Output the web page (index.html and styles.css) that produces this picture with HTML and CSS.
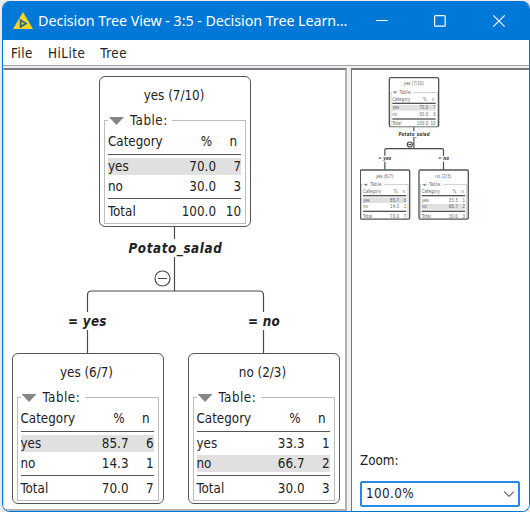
FILE: index.html
```html
<!DOCTYPE html>
<html lang="en">
<head>
<meta charset="utf-8">
<title>Decision Tree View</title>
<link rel="stylesheet" href="styles.css">
</head>
<body>
<div class="window">
  <header class="titlebar">
    <svg class="logo" width="22" height="20" viewBox="0 0 22 20"><path d="M11 1 21 18H1Z" fill="#f7d51d"/><path d="M8.6 9.2 14 12.5 8.6 15.8Z" fill="none" stroke="#276a8c" stroke-width="1.8"/></svg>
    <span class="title">Decision Tree View - 3:5 - Decision Tree Learn...</span>
    <svg class="controls" width="136" height="14" viewBox="0 0 136 14" fill="none" stroke="#fff" stroke-width="1.2"><path d="M0 6.5H12"/><rect x="58.6" y="1.6" width="10.6" height="10.6" rx="1"/><path d="M117.3 1.3 128.7 12.7M128.7 1.3 117.3 12.7"/></svg>
  </header>
  <nav class="menu"><span>File</span><span>HiLite</span><span>Tree</span></nav>
  <main class="panes">
    <section class="main-pane">
      <div class="tree" id="tree">
        <svg class="links" width="342" height="440" viewBox="0 0 342 440">
          <path d="M170.5 157V169M170.5 187V221M83.5 242V225Q83.5 221 87.5 221H255.5Q259.5 221 259.5 225V242M83.5 260V284M259.5 260V284"/>
          <circle cx="158.5" cy="208.5" r="7.5"/><path d="M154 208.5H163"/>
        </svg>
        <span class="split root-split">Potato_salad</span>
        <span class="split left-split">= yes</span>
        <span class="split right-split">= no</span>
        <article class="node root">
          <h2>yes (7/10)</h2>
          <div class="box"><div class="caption"><i></i>Table:</div>
            <div class="row head"><span>Category</span><span>%</span><span>n</span></div>
            <div class="row hit"><span>yes</span><span>70.0</span><span>7</span></div>
            <div class="row"><span>no</span><span>30.0</span><span>3</span></div>
            <div class="row total"><span>Total</span><span>100.0</span><span>10</span></div>
          </div>
        </article>
        <article class="node left">
          <h2>yes (6/7)</h2>
          <div class="box"><div class="caption"><i></i>Table:</div>
            <div class="row head"><span>Category</span><span>%</span><span>n</span></div>
            <div class="row hit"><span>yes</span><span>85.7</span><span>6</span></div>
            <div class="row"><span>no</span><span>14.3</span><span>1</span></div>
            <div class="row total"><span>Total</span><span>70.0</span><span>7</span></div>
          </div>
        </article>
        <article class="node right">
          <h2>no (2/3)</h2>
          <div class="box"><div class="caption"><i></i>Table:</div>
            <div class="row head"><span>Category</span><span>%</span><span>n</span></div>
            <div class="row"><span>yes</span><span>33.3</span><span>1</span></div>
            <div class="row hit"><span>no</span><span>66.7</span><span>2</span></div>
            <div class="row total"><span>Total</span><span>30.0</span><span>3</span></div>
          </div>
        </article>
      </div>
    </section>
    <aside class="side-pane">
      <div class="overview" id="overview"></div>
      <div class="zoom-label">Zoom:</div>
      <div class="select"><span>100.0%</span><svg width="12" height="8" viewBox="0 0 12 8"><path d="M1 1.5 6 6.3 11 1.5" fill="none" stroke="#777" stroke-width="1.2"/></svg></div>
    </aside>
  </main>
</div>
<script src="app.js"></script>
</body>
</html>
```
FILE: app.js
```js
// The overview shows a scaled-down copy of the main tree.
const copy = document.getElementById('tree').cloneNode(true);
copy.removeAttribute('id');
copy.classList.add('mini');
document.getElementById('overview').appendChild(copy);
```
FILE: styles.css
```css
* { box-sizing: border-box; }
body { margin: 0; padding: 1px 0 0 2px; width: 530px; height: 512px; overflow: hidden; background: #ebebeb; color: #222; font: 13.3px/18px "DejaVu Sans Condensed", "Noto Sans", sans-serif; }
.window { width: 528px; height: 511px; border: 1px solid #0078d7; border-top: 0; border-radius: 8px; background: #f0f0f0; overflow: hidden; display: flex; flex-direction: column; }
.titlebar { height: 39px; flex: none; background: #0078d7; color: #fff; display: flex; align-items: center; padding-left: 9px; }
.logo { flex: none; }
.title { width: 318px; margin-left: 4px; font: 14.3px/20px "Noto Sans", sans-serif; letter-spacing: -.06px; white-space: nowrap; }
.controls { margin-left: 20px; flex: none; }
.menu { height: 25px; flex: none; background: #fff; display: flex; gap: 15px; padding: 5px 8px; letter-spacing: .5px; }
.panes { flex: 1; border-top: 1px solid #a0a0a0; padding-top: 2px; display: flex; gap: 4px; min-height: 0; }
.main-pane { width: 344px; flex: none; background: #fff; border: 2px solid #adb2bb; border-top-color: #777b82; border-left: 1px solid #ddd; overflow: hidden; }
.side-pane { flex: 1; min-width: 0; background: #fff; border-top: 2px solid #777; border-left: 1px solid #777; padding: 0 9px 4px 8px; display: flex; flex-direction: column; }
.tree { position: relative; width: 342px; height: 440px; }
.links { position: absolute; left: 0; top: 0; fill: none; stroke: #4a4a4a; stroke-width: 1.2; }
.split { position: absolute; font-weight: bold; font-style: italic; white-space: nowrap; }
.root-split { left: 124.5px; top: 170px; letter-spacing: .6px; }
.left-split { left: 64px; top: 243px; letter-spacing: .3px; }
.right-split { left: 244px; top: 243px; letter-spacing: .3px; }
.node { position: absolute; width: 152px; height: 151px; border: 1.5px solid #555; border-radius: 6px; background: #fff; padding: 0 4px; }
.root { left: 95px; top: 6px; }
.left { left: 7.5px; top: 283px; }
.right { left: 183.5px; top: 283px; }
h2 { margin: 10px 0 15px; padding-right: 2px; text-align: center; font: inherit; }
.box { height: 104px; border: 1px solid #bdbdbd; padding: 0 4px 0 3px; }
.caption { width: 64px; height: 20px; margin-top: -9px; line-height: 18px; letter-spacing: .5px; display: flex; background: #fff; }
.caption i { flex: none; width: 15px; height: 8px; margin: 5px 6px 0 1px; background: #858585; clip-path: polygon(0 0, 100% 0, 50% 100%); }
.row { height: 17px; margin-top: 3px; line-height: 17px; display: grid; grid-template-columns: 60px 48px 1fr; }
.row span { text-align: right; }
.row span:first-child { text-align: left; }
.hit { background: #e0e0e0; }
.head { height: 23px; margin-top: 0; padding-right: 4px; border-bottom: 1.5px solid #555; line-height: 20px; }
.head span:nth-child(2) { padding-right: 4px; }
.total { height: 23px; border-top: 1.5px solid #555; line-height: 25px; }
.overview { height: 377px; overflow: hidden; }
.mini { transform: scale(.333333); transform-origin: 0 0; margin-left: -3px; top: 5px; color: #666; }
.mini .split { color: #333; }
.mini .node { border-width: 4px; padding: 0 1.5px; }
.mini h2 { margin-top: 7.5px; }
.mini .head { border-bottom-width: 4px; }
.mini .total { border-top-width: 4px; }
.mini .box { border-width: 2px; }
.mini .links { stroke-width: 3.5; }
.zoom-label { margin-top: 5px; }
.select { height: 26px; margin-top: 11px; border: 2px solid #248be0; border-radius: 2px; display: flex; align-items: center; justify-content: space-between; padding: 0 3px 0 4px; letter-spacing: .4px; }
```
